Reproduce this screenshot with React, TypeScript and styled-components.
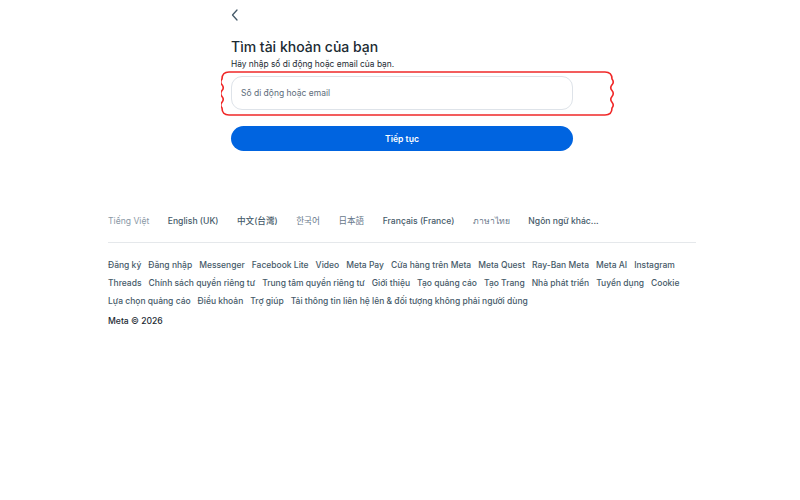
import React from "react";
import styled, { createGlobalStyle } from "styled-components";

const Global = createGlobalStyle`
  html, body { margin: 0; padding: 0; background: #fff; }
  body { font-family: Inter, "Noto Sans", "Noto Sans CJK SC", sans-serif; color: #1c2b33; -webkit-font-smoothing: antialiased; }
`;

const Page = styled.div`
  width: 796px;
  height: 500px;
  padding-left: 4px;
  display: flex;
  flex-direction: column;
  align-items: center;
`;

const Main = styled.div`
  width: 342px;
  padding-top: 7px;
  display: flex;
  flex-direction: column;
`;

const BackButton = styled.button`
  width: 16px;
  height: 16px;
  padding: 0;
  border: 0;
  background: none;
  color: #465a69;
  display: flex;
  align-items: center;
  justify-content: center;
  margin-left: -4px;
`;

const Title = styled.h1`
  margin: 14px 0 0;
  font-size: 14px;
  font-weight: 500;
  line-height: 20px;
  color: #1c2b33;
`;

const Subtitle = styled.p`
  margin: 0;
  font-size: 8.4px;
  line-height: 14px;
  color: #1c2b33;
`;

const FieldWrap = styled.div`
  position: relative;
  margin-top: 5px;
`;

const Input = styled.input`
  box-sizing: border-box;
  width: 342px;
  height: 34px;
  border: 1px solid #dee3e9;
  border-radius: 11px;
  padding: 0 9px;
  font-family: inherit;
  font-size: 8.5px;
  color: #1c2b33;
  background: #fff;
  outline: none;
  &::placeholder { color: #5d6c7b; }
`;

const Annotation = styled.svg`
  position: absolute;
  left: -10px;
  top: -5px;
  pointer-events: none;
`;

const PrimaryButton = styled.button`
  margin-top: 16px;
  height: 25px;
  width: 342px;
  border: 0;
  border-radius: 13px;
  background: #0064e0;
  color: #fff;
  font-family: inherit;
  font-size: 8.6px;
  font-weight: 600;
`;

const Footer = styled.footer`
  width: 588px;
  margin-top: 63px;
  display: flex;
  flex-direction: column;
`;

const LangRow = styled.div`
  display: flex;
  gap: 18.5px;
  font-size: 8.6px;
  line-height: 14px;
  padding-bottom: 14px;
  border-bottom: 1px solid #e5e8eb;
`;

const Lang = styled.span<{ $current?: boolean; $light?: boolean }>`
  color: ${(p) => (p.$current ? "#8a98a6" : p.$light ? "#67788a" : "#465a69")};
  font-weight: ${(p) => (p.$current || p.$light ? 400 : 500)};
`;

const Links = styled.div`
  margin-top: 15px;
  display: flex;
  flex-wrap: wrap;
  column-gap: 7px;
  row-gap: 4px;
  font-size: 8.5px;
  font-weight: 500;
  line-height: 14px;
  color: #465a69;
`;

const Copyright = styled.div`
  margin-top: 6px;
  font-size: 8.6px;
  font-weight: 500;
  line-height: 14px;
  color: #1c2b33;
`;

const langs: { label: string; light?: boolean }[] = [
  { label: "English (UK)" },
  { label: "中文(台灣)" },
  { label: "한국어", light: true },
  { label: "日本語", light: true },
  { label: "Français (France)" },
  { label: "ภาษาไทย", light: true },
  { label: "Ngôn ngữ khác..." },
];

const links = [
  "Đăng ký", "Đăng nhập", "Messenger", "Facebook Lite", "Video", "Meta Pay", "Cửa hàng trên Meta", "Meta Quest", "Ray-Ban Meta", "Meta AI", "Instagram",
  "Threads", "Chính sách quyền riêng tư", "Trung tâm quyền riêng tư", "Giới thiệu", "Tạo quảng cáo", "Tạo Trang", "Nhà phát triển", "Tuyển dụng", "Cookie",
  "Lựa chọn quảng cáo", "Điều khoản", "Trợ giúp", "Tải thông tin liên hệ lên & đối tượng không phải người dùng",
];

const wavyPath = (() => {
  const w = 390, h = 43, r = 7;
  const x0 = 1, y0 = 1;
  let d = `M ${x0 + r} ${y0} H ${x0 + w - r} Q ${x0 + w} ${y0} ${x0 + w} ${y0 + r}`;
  const waves = 5;
  const seg = (h - 2 * r) / waves;
  for (let i = 0; i < waves; i++) {
    const ya = y0 + r + seg * i;
    d += ` Q ${x0 + w + (i % 2 ? -2.5 : 2.5)} ${ya + seg / 2} ${x0 + w} ${ya + seg}`;
  }
  d += ` Q ${x0 + w} ${y0 + h} ${x0 + w - r} ${y0 + h} H ${x0 + r} Q ${x0} ${y0 + h} ${x0} ${y0 + h - r}`;
  for (let i = 0; i < waves; i++) {
    const ya = y0 + h - r - seg * i;
    d += ` Q ${x0 + (i % 2 ? 2.5 : -2.5)} ${ya - seg / 2} ${x0} ${ya - seg}`;
  }
  d += ` Q ${x0} ${y0} ${x0 + r} ${y0} Z`;
  return d;
})();

export default function App() {
  return (
    <Page>
      <Global />
      <Main>
        <BackButton aria-label="Quay lại">
          <svg width="10" height="12" viewBox="0 0 10 12" fill="none">
            <path d="M7 1 L2.5 6 L7 11" stroke="#465a69" strokeWidth="1.3" strokeLinecap="round" strokeLinejoin="round" />
          </svg>
        </BackButton>
        <Title>Tìm tài khoản của bạn</Title>
        <Subtitle>Hãy nhập số di động hoặc email của bạn.</Subtitle>
        <FieldWrap>
          <Input placeholder="Số di động hoặc email" />
          <Annotation width="394" height="46" viewBox="0 0 394 46">
            <path d={wavyPath} fill="none" stroke="#f02828" strokeWidth="1.6" />
          </Annotation>
        </FieldWrap>
        <PrimaryButton>Tiếp tục</PrimaryButton>
      </Main>
      <Footer>
        <LangRow>
          <Lang $current>Tiếng Việt</Lang>
          {langs.map((l) => (
            <Lang key={l.label} $light={l.light}>{l.label}</Lang>
          ))}
        </LangRow>
        <Links>
          {links.map((l) => (
            <span key={l}>{l}</span>
          ))}
        </Links>
        <Copyright>Meta © 2026</Copyright>
      </Footer>
    </Page>
  );
}
